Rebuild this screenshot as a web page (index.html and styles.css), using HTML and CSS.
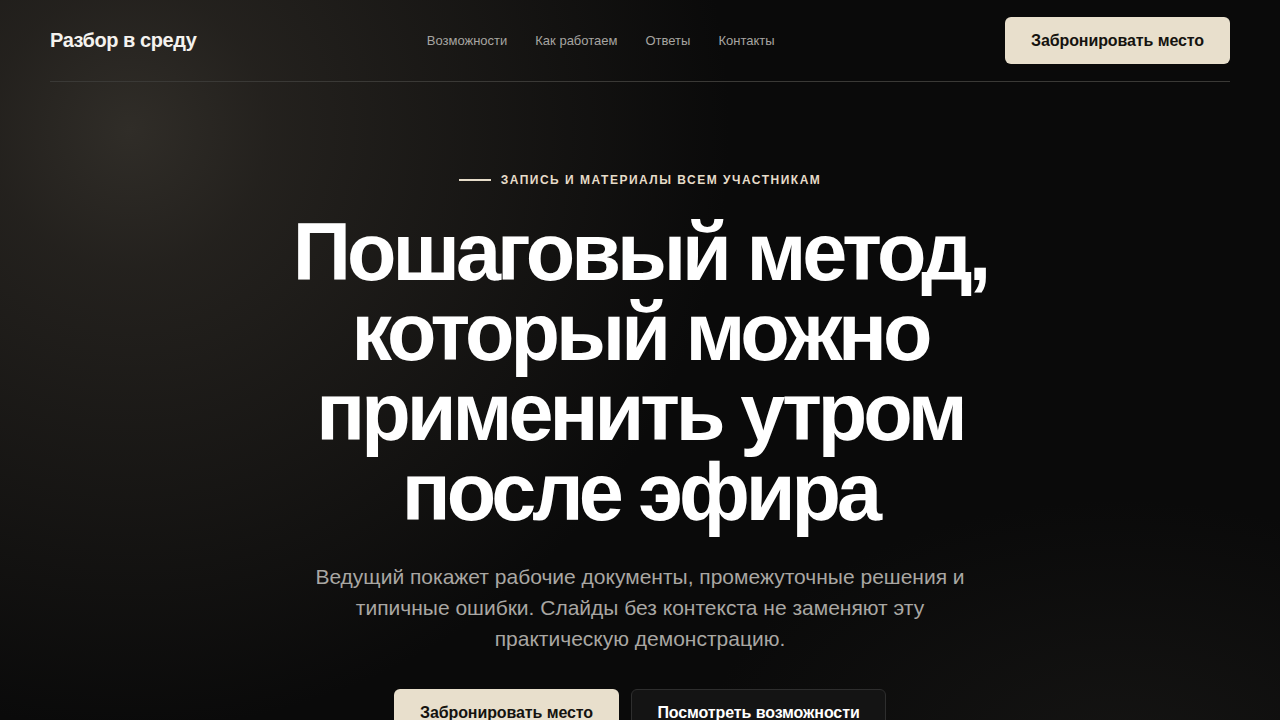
FILE: index.html
```html
<!DOCTYPE html>
<html lang="ru">
<head>
<meta charset="utf-8">
<title>Разбор в среду</title>
<link rel="stylesheet" href="styles.css">
</head>
<body>
<div class="page">
  <header class="header">
    <a class="logo" href="#">Разбор в среду</a>
    <nav class="nav">
      <a href="#">Возможности</a>
      <a href="#">Как работаем</a>
      <a href="#">Ответы</a>
      <a href="#">Контакты</a>
    </nav>
    <a class="btn btn-primary btn-header" href="#">Забронировать место</a>
  </header>
  <main class="hero">
    <div class="eyebrow"><span class="eyebrow-line"></span>Запись и материалы всем участникам</div>
    <h1 class="title">Пошаговый метод, который можно применить утром после эфира</h1>
    <p class="lead">Ведущий покажет рабочие документы, промежуточные решения и типичные ошибки. Слайды без контекста не заменяют эту практическую демонстрацию.</p>
    <div class="actions">
      <a class="btn btn-primary" href="#">Забронировать место</a>
      <a class="btn btn-secondary" href="#">Посмотреть возможности</a>
    </div>
  </main>
</div>
</body>
</html>
```
FILE: styles.css
```css
html, body {
  margin: 0;
  padding: 0;
  height: 100%;
}
body {
  background-color: #0a0a0a;
  background-image:
    radial-gradient(circle at 130px 130px, rgba(48, 45, 40, 1) 0px, rgba(40, 37, 33, 0.85) 140px, rgba(10, 10, 10, 0) 600px),
    radial-gradient(ellipse 420px 260px at 1120px 760px, rgba(28, 27, 25, 0.6), rgba(10, 10, 10, 0));
  color: #fff;
  font-family: "Liberation Sans", Arial, sans-serif;
  overflow: hidden;
}
a {
  text-decoration: none;
  color: inherit;
}
.page {
  padding: 0 50px;
}
.header {
  display: flex;
  align-items: center;
  justify-content: space-between;
  height: 82px;
  border-bottom: 1px solid #3a3936;
  box-sizing: border-box;
}
.logo {
  font-size: 20px;
  font-weight: 700;
  letter-spacing: -0.45px;
  color: #f4f2ee;
}
.nav {
  display: flex;
  gap: 28px;
  font-size: 13px;
  color: #a7a5a1;
}
.btn {
  display: inline-flex;
  align-items: center;
  justify-content: center;
  height: 48px;
  box-sizing: border-box;
  border-radius: 6px;
  font-size: 16px;
  font-weight: 700;
  letter-spacing: -0.1px;
}
.btn-primary {
  background: #e8dfcc;
  color: #15130f;
  padding: 0 25px;
}
.btn-header {
  height: 47px;
  width: 225px;
  padding: 0;
}
.btn-secondary {
  background: #141414;
  color: #fff;
  border: 1px solid #2e2e2e;
  padding: 0 25px;
}
.hero {
  display: flex;
  flex-direction: column;
  align-items: center;
  text-align: center;
  padding-top: 90px;
}
.eyebrow {
  display: flex;
  align-items: center;
  gap: 10px;
  font-size: 12px;
  font-weight: 700;
  text-transform: uppercase;
  letter-spacing: 1.5px;
  color: #e6dcc9;
  height: 16px;
}
.eyebrow-line {
  display: block;
  width: 32px;
  height: 2px;
  background: #e6dcc9;
}
.title {
  margin: 24px 0 0;
  font-size: 81px;
  line-height: 80px;
  font-weight: 700;
  letter-spacing: -4px;
  color: #fff;
  width: 720px;
}
.lead {
  margin: 29px 0 0;
  width: 660px;
  font-size: 21px;
  line-height: 31px;
  color: #a9a7a3;
}
.actions {
  display: flex;
  gap: 12px;
  margin-top: 35px;
}
.actions .btn-primary {
  width: 225px;
  padding: 0;
}
.actions .btn-secondary {
  width: 255px;
  padding: 0;
}
```
